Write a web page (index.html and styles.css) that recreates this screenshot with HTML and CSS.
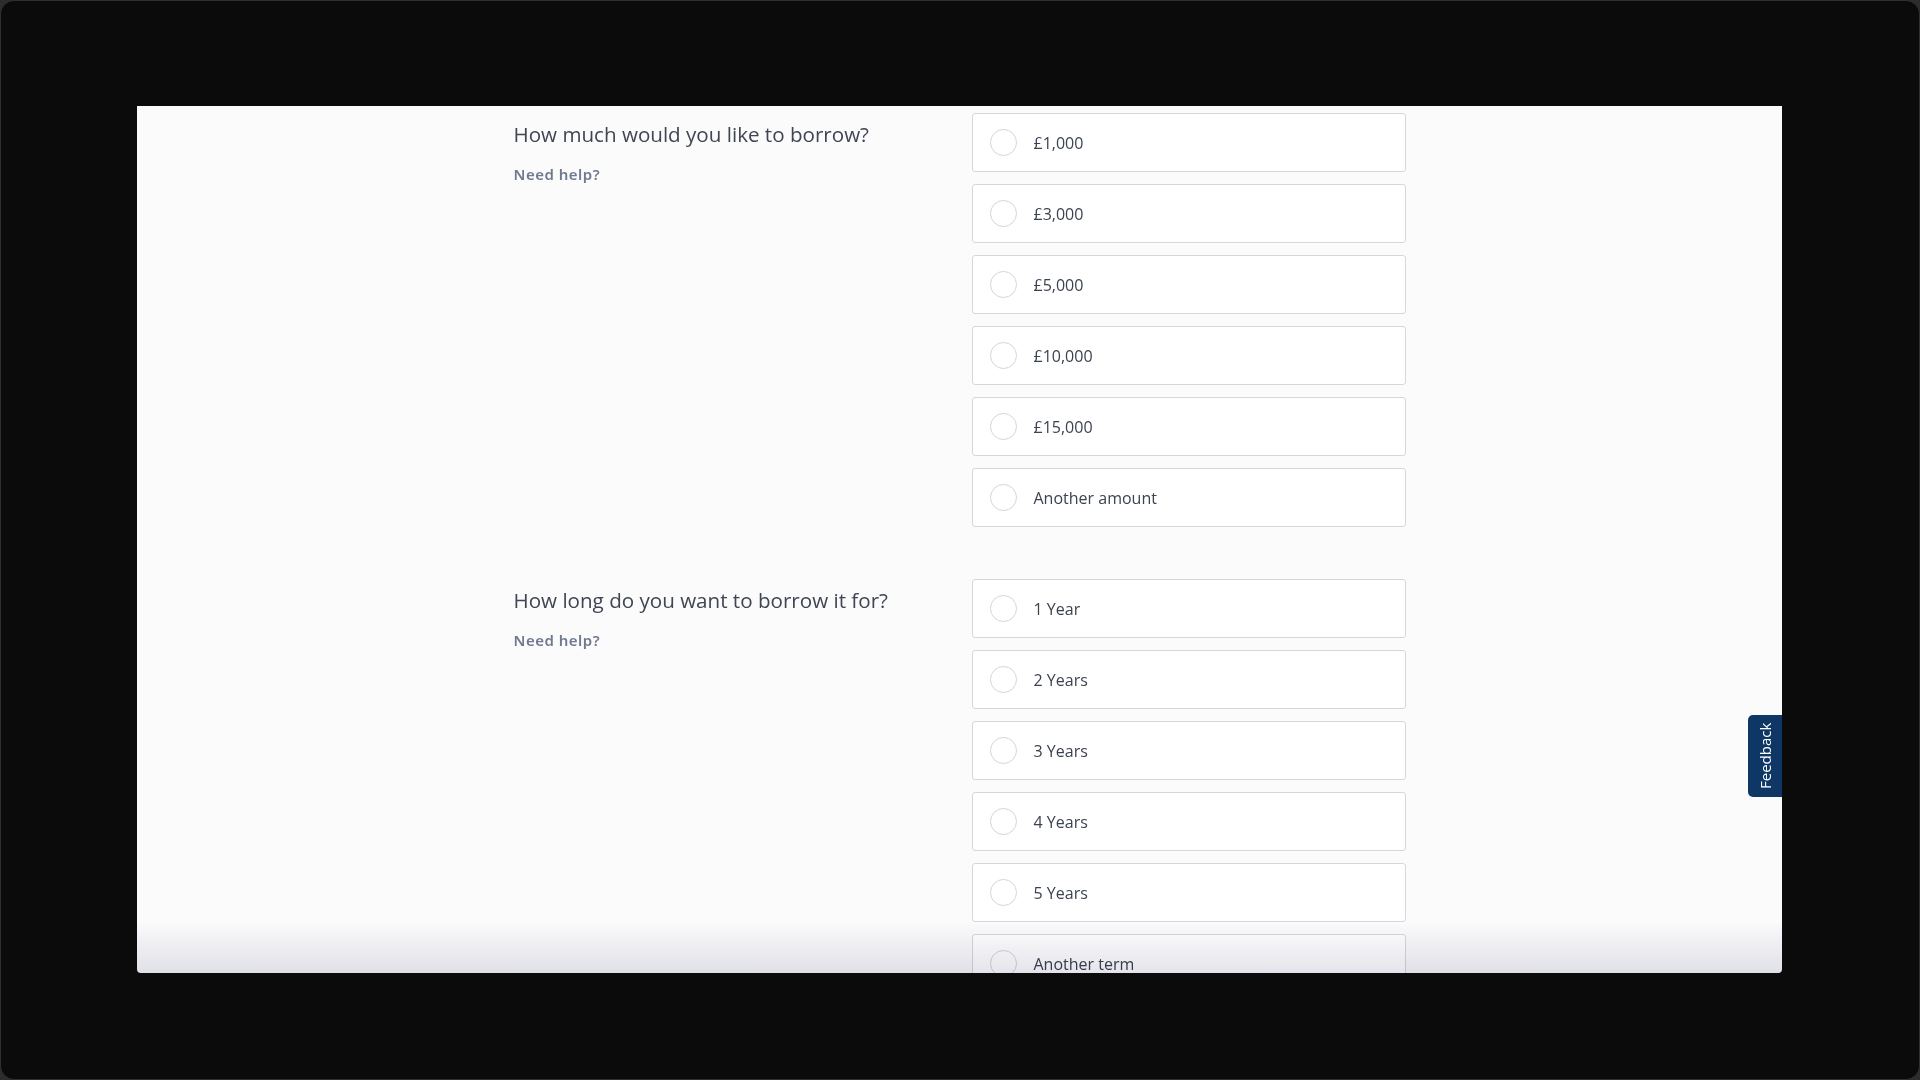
FILE: index.html
```html
<!DOCTYPE html>
<html lang="en">
<head>
  <meta charset="UTF-8">
  <title>Loan Quote</title>
  <link rel="stylesheet" href="styles.css">
</head>
<body>
  <div class="frame">
    <div class="screen">
      <form class="quote">

        <!-- Loan amount -->
        <section class="question">
          <div class="question-copy">
            <h2>How much would you like to borrow?</h2>
            <a class="help" href="#">Need help?</a>
          </div>
          <div class="options">
            <label class="option"><input type="radio" name="amount" value="1000"><span class="dot"></span>£1,000</label>
            <label class="option"><input type="radio" name="amount" value="3000"><span class="dot"></span>£3,000</label>
            <label class="option"><input type="radio" name="amount" value="5000"><span class="dot"></span>£5,000</label>
            <label class="option"><input type="radio" name="amount" value="10000"><span class="dot"></span>£10,000</label>
            <label class="option"><input type="radio" name="amount" value="15000"><span class="dot"></span>£15,000</label>
            <label class="option"><input type="radio" name="amount" value="other"><span class="dot"></span>Another amount</label>
          </div>
        </section>

        <!-- Loan term -->
        <section class="question">
          <div class="question-copy">
            <h2>How long do you want to borrow it for?</h2>
            <a class="help" href="#">Need help?</a>
          </div>
          <div class="options">
            <label class="option"><input type="radio" name="term" value="1"><span class="dot"></span>1 Year</label>
            <label class="option"><input type="radio" name="term" value="2"><span class="dot"></span>2 Years</label>
            <label class="option"><input type="radio" name="term" value="3"><span class="dot"></span>3 Years</label>
            <label class="option"><input type="radio" name="term" value="4"><span class="dot"></span>4 Years</label>
            <label class="option"><input type="radio" name="term" value="5"><span class="dot"></span>5 Years</label>
            <label class="option"><input type="radio" name="term" value="other"><span class="dot"></span>Another term</label>
          </div>
        </section>

      </form>

      <button type="button" class="feedback">Feedback</button>
      <div class="fade"></div>
    </div>
  </div>
</body>
</html>
```

FILE: styles.css
```css
* {
  box-sizing: border-box;
}

html, body {
  margin: 0;
  padding: 0;
  background: #2c2c2c;
}

.frame {
  width: 1920px;
  height: 1080px;
  padding: 105px 0 0 136px;
  background: #0b0b0b;
  border: 1px solid #303030;
  border-radius: 14px;
  overflow: hidden;
}

.screen {
  position: relative;
  width: 1645px;
  height: 867px;
  background: #fbfbfc;
  border-radius: 0 0 4px 4px;
  overflow: hidden;
  font-family: 'Open Sans', sans-serif;
  color: #3d4450;
}

.quote {
  width: 892px;
  margin: 0 auto;
  padding-top: 7px;
}

.question {
  display: grid;
  grid-template-columns: 458px 434px;
  margin-bottom: 52px;
}

.question-copy {
  padding-top: 7px;
}

h2 {
  margin: 0;
  font-size: 20.6px;
  line-height: 28px;
  font-weight: 400;
  color: #3f4652;
}

.help {
  display: inline-block;
  margin-top: 16px;
  font-family: 'Noto Sans', sans-serif;
  font-size: 15px;
  line-height: 20px;
  font-weight: 600;
  letter-spacing: 0.5px;
  color: #6f7a8e;
  text-decoration: none;
}

.options {
  display: flex;
  flex-direction: column;
  gap: 12px;
}

.option {
  display: flex;
  align-items: center;
  height: 59px;
  padding-left: 17px;
  background: #fff;
  border: 1px solid #d5d7dd;
  border-radius: 3px;
  font-size: 16px;
  color: #3c4350;
  cursor: pointer;
}

.option input {
  display: none;
}

.dot {
  width: 27px;
  height: 27px;
  margin-right: 17px;
  border: 1.5px solid #d3d5db;
  border-radius: 50%;
  background: #fff;
}

.feedback {
  position: absolute;
  right: 0;
  top: 609px;
  width: 34px;
  height: 82px;
  padding: 0;
  border: none;
  border-radius: 0 5px 5px 0;
  background: #0e3766;
  color: #fff;
  font-family: 'Open Sans', sans-serif;
  font-size: 15px;
  writing-mode: vertical-rl;
  transform: rotate(180deg);
}

/* soft shade where the page scrolls out of view */
.fade {
  position: absolute;
  left: 0;
  right: 0;
  bottom: 0;
  height: 52px;
  background: linear-gradient(to bottom, rgba(230, 230, 236, 0), rgba(228, 228, 234, 1));
  mix-blend-mode: multiply;
  pointer-events: none;
}
```
